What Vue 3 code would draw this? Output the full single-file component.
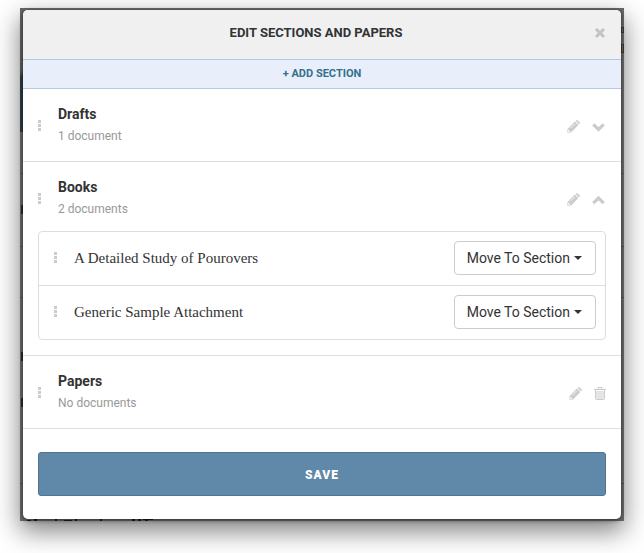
<script setup>
import { ref } from 'vue'

const sections = ref([
  { name: 'Drafts', count: '1 document', open: false, papers: ['Draft'] },
  {
    name: 'Books',
    count: '2 documents',
    open: true,
    papers: ['A Detailed Study of Pourovers', 'Generic Sample Attachment'],
  },
  { name: 'Papers', count: 'No documents', open: false, papers: [] },
])
</script>

<template>
  <main class="stage">
    <div class="backdrop">
      <div class="cover"></div>
      <div class="behind" aria-hidden="true">
        <i class="rule r1"></i>
        <i class="rule r2"></i>
        <i class="rule r3"></i>
        <i class="rule r4"></i>
        <i class="mark m1"></i>
        <i class="mark m2"></i>
        <i class="mark m3"></i>
        <i class="tag t1"></i>
        <i class="tag t2"></i>
        <svg class="caps" width="130" height="2" viewBox="0 0 130 2">
          <path d="M1 1h4v1h-4z M8 0h3v2h-3z M29 0h2v2h-2z M38 1h8v1h-8z M49 0h2v2h-2z M74 0h2v2h-2z M106 0h3v2h-3z M112 0h3v2h-3z M117 0h10v1h-10z M119 1h3v1h-3z" fill="#1c1c1c" />
        </svg>
      </div>
      <section class="modal" role="dialog" aria-labelledby="modal-title">
        <header class="header">
          <h1 id="modal-title">EDIT SECTIONS AND PAPERS</h1>
          <button class="icon close" type="button" aria-label="Close">
            <svg width="12" height="12" viewBox="0 0 12 12">
              <path d="M2 2 L10 10 M10 2 L2 10" fill="none" stroke="currentColor" stroke-width="3" />
            </svg>
          </button>
        </header>
        <button class="add" type="button">+ ADD SECTION</button>

        <section v-for="s in sections" :key="s.name" class="section">
          <div class="head">
            <svg class="handle" width="3" height="11" viewBox="0 0 3 11" aria-hidden="true">
              <path d="M0 0h3v3H0z M0 4h3v3H0z M0 8h3v3H0z" fill="currentColor" />
            </svg>
            <div class="text">
              <h2>{{ s.name }}</h2>
              <p>{{ s.count }}</p>
            </div>
            <div class="actions">
              <button class="icon" type="button" :aria-label="'Rename ' + s.name">
                <svg width="13" height="13" viewBox="0 0 13 13">
                  <path d="M0.300 12.700 L0.600 8.900 L7.900 1.600 L11.400 5.100 L4.100 12.400 Z M8.600 0.900 L9.200 0.400 Q10 -0.200 10.700 0.400 L12.600 2.300 Q13.200 3 12.600 3.800 L12.100 4.400 Z" fill="currentColor" />
                  <path d="M3.300 8.200 L7.700 3.800" stroke="#fff" stroke-width="0.800" />
                  <path d="M1.500 9.800 v1.700 h1.700" fill="none" stroke="#fff" stroke-width="0.900" />
                </svg>
              </button>
              <button
                v-if="s.papers.length"
                class="icon"
                type="button"
                :aria-expanded="s.open"
                :aria-label="'Toggle ' + s.name"
                @click="s.open = !s.open"
              >
                <svg width="14" height="13" viewBox="0 0 14 13">
                  <path :d="s.open ? 'M1.300 10.200 L6.500 5 L11.700 10.200' : 'M1.300 4.300 L6.500 9.500 L11.700 4.300'" fill="none" stroke="currentColor" stroke-width="3.200" />
                </svg>
              </button>
              <button v-else class="icon" type="button" :aria-label="'Delete ' + s.name">
                <svg width="12" height="13" viewBox="0 0 12 13">
                  <path d="M2 4h8v8h-8z" fill="#e4e4e4" />
                  <path d="M0 2.500h12 M4 2.500V0.500h4V2.500 M1.500 2.500V11.500q0 1 1 1h7q1 0 1-1V2.500" fill="none" stroke="currentColor" />
                </svg>
              </button>
            </div>
          </div>
          <ul v-if="s.open" class="papers">
            <li v-for="p in s.papers" :key="p">
              <svg class="handle" width="3" height="11" viewBox="0 0 3 11" aria-hidden="true">
                <path d="M0 0h3v3H0z M0 4h3v3H0z M0 8h3v3H0z" fill="currentColor" />
              </svg>
              <span class="name">{{ p }}</span>
              <button class="move" type="button" aria-haspopup="true">
                Move To Section
                <svg width="8" height="4" viewBox="0 0 8 4" aria-hidden="true"><path d="M0 0h8L4 4z" fill="currentColor" /></svg>
              </button>
            </li>
          </ul>
        </section>

        <footer class="footer">
          <button class="save" type="button">SAVE</button>
        </footer>
      </section>
    </div>
  </main>
</template>

<style>
body {
  margin: 0;
  background: #fff;
}
</style>

<style scoped>
.stage {
  padding: 8px 20px 32px;
  overflow: hidden;
  font-family: Roboto, "Liberation Sans", sans-serif;
  color: #333;
}
.backdrop {
  position: relative;
  padding: 2px 3px;
  background: #666;
  box-shadow: 0 10px 24px rgba(0, 0, 0, 0.5);
}
.cover {
  position: absolute;
  left: 0;
  top: 0;
  width: 3px;
  height: 124px;
  background: linear-gradient(#5f6664, #5a5954 50%, #2b3940 56%, #2b3940);
}
.behind {
  position: absolute;
  inset: 0;
  overflow: hidden;
}
.behind i,
.caps {
  position: absolute;
}
.rule {
  left: 0;
  right: 0;
  height: 1px;
  background: #505050;
}
.r1 { top: 165px; }
.r2 { top: 238px; }
.r3 { top: 289px; }
.r4 { top: 475px; }
.mark {
  left: 1px;
  width: 2px;
  height: 9px;
  background: #2a2a2a;
}
.m1 { top: 197px; }
.m2 { top: 344px; }
.m3 { top: 390px; }
.tag {
  right: 0;
  width: 3px;
  height: 6px;
  box-sizing: border-box;
  border: 1px solid #3c352b;
  background: #6b6250;
}
.t1 { top: 19px; }
.t2 { top: 36px; height: 9px; }
.caps {
  left: 6px;
  bottom: 0;
}
.modal {
  position: relative;
  background: #fff;
  border-radius: 5px;
  box-shadow: 0 1px 4px rgba(0, 0, 0, 0.6);
  overflow: hidden;
}
h1,
h2,
p,
ul {
  margin: 0;
  padding: 0;
}
button {
  font-family: inherit;
  margin: 0;
  cursor: pointer;
}
.header {
  display: grid;
  grid-template-columns: 1fr 12px;
  align-items: center;
  height: 46px;
  padding: 0 15px 3px;
  background: #f0f0f0;
}
.header h1 {
  text-align: center;
  font-size: 13px;
  line-height: 20px;
  font-weight: 700;
}
.icon {
  display: block;
  padding: 0;
  border: 0;
  background: none;
  color: #ccc;
}
.icon svg,
.handle {
  display: block;
}
.close {
  color: #c3c3c3;
}
.add {
  display: block;
  width: 100%;
  height: 30px;
  padding: 0;
  border: solid #b5c8df;
  border-width: 1px 0;
  background: #e8effa;
  color: #33708f;
  font-size: 11px;
  line-height: 28px;
  font-weight: 700;
}
.section {
  padding: 14px 15px;
  border-bottom: 1px solid #ddd;
}
.head {
  display: flex;
  align-items: center;
}
.handle {
  flex: none;
  color: #ccc;
}
.text {
  flex: 1;
  padding-left: 17px;
}
h2 {
  font-size: 14px;
  line-height: 22px;
  font-weight: 700;
}
.text p {
  font-size: 12px;
  line-height: 22px;
  color: #999;
}
.actions {
  display: flex;
  align-items: center;
  gap: 12px;
  padding-top: 2px;
}
.papers {
  margin: 11px 0 1px;
  list-style: none;
  border: 1px solid #ddd;
  border-radius: 4px;
}
.papers li {
  display: flex;
  align-items: center;
  height: 51px;
  padding: 0 9px 2px 15px;
}
.papers li + li {
  border-top: 1px solid #ddd;
}
.name {
  flex: 1;
  padding-left: 17px;
  font-family: "Liberation Serif", serif;
  font-size: 15px;
  line-height: 20px;
}
.move {
  display: flex;
  align-items: center;
  gap: 4px;
  height: 34px;
  padding: 0 13px 0 12px;
  border: 1px solid #ccc;
  border-radius: 4px;
  background: #fff;
  color: #333;
  font-size: 14px;
}
.footer {
  padding: 23px 15px;
}
.save {
  display: block;
  width: 100%;
  height: 44px;
  padding: 2px 0 0;
  border: 1px solid #4f7591;
  border-radius: 3px;
  background: #6088a8;
  color: #fff;
  font-size: 12px;
  font-weight: 900;
  letter-spacing: 1px;
}
</style>
